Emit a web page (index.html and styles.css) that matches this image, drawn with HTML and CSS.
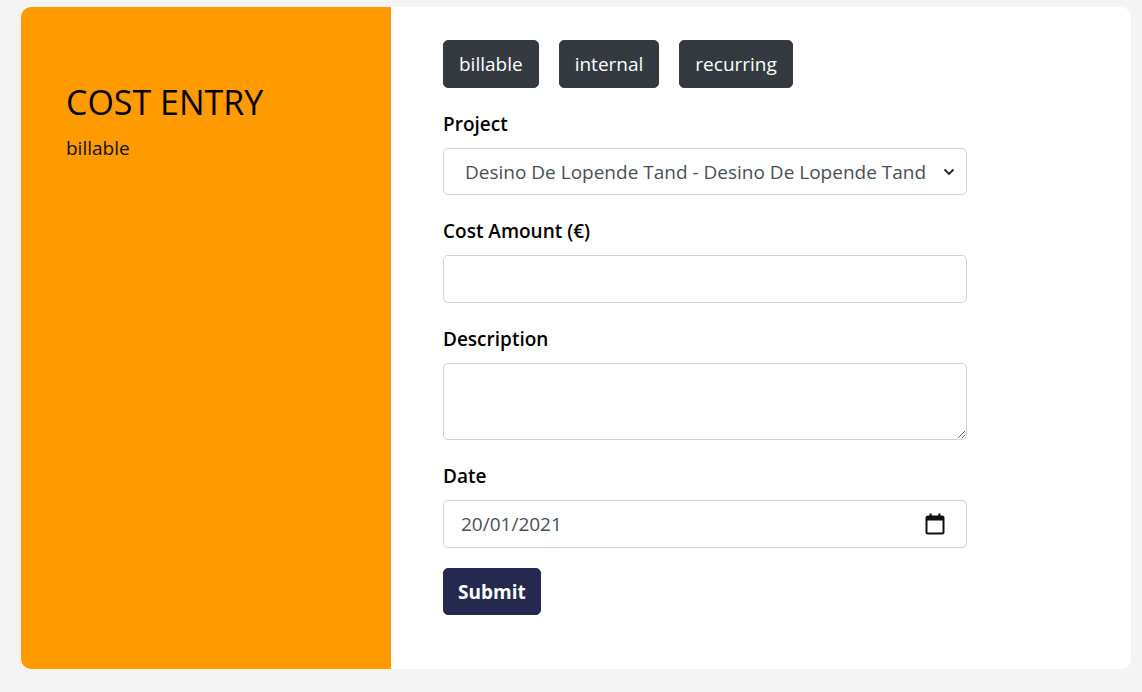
FILE: index.html
```html
<!DOCTYPE html>
<html lang="en">
<head>
<meta charset="utf-8">
<title>Cost Entry</title>
<link rel="stylesheet" href="styles.css">
</head>
<body>
<div class="card">
  <aside class="side">
    <h3 class="side-title">COST ENTRY</h3>
    <p class="side-sub">billable</p>
  </aside>
  <main class="content">
    <div class="types">
      <button class="btn btn-dark" type="button">billable</button>
      <button class="btn btn-dark" type="button">internal</button>
      <button class="btn btn-dark" type="button">recurring</button>
    </div>
    <form class="form">
      <div class="group">
        <label class="label" for="project">Project</label>
        <div class="select-wrap">
          <select id="project" class="control select">
            <option>Desino De Lopende Tand - Desino De Lopende Tand</option>
          </select>
          <svg class="chev" width="12" height="8" viewBox="0 0 12 8"><path d="M1.5 1.5 L6 6 L10.5 1.5" fill="none" stroke="#222" stroke-width="1.8"/></svg>
        </div>
      </div>
      <div class="group">
        <label class="label" for="amount">Cost Amount (€)</label>
        <input id="amount" class="control" type="text">
      </div>
      <div class="group">
        <label class="label" for="desc">Description</label>
        <textarea id="desc" class="control area" rows="2"></textarea>
      </div>
      <div class="group">
        <label class="label" for="date">Date</label>
        <div class="control date-field">
          <input id="date" class="date-input" type="text" value="20/01/2021">
          <svg class="cal" width="20" height="22" viewBox="0 0 20 22"><rect x="1.5" y="3.5" width="17" height="17" rx="1.5" fill="none" stroke="#111" stroke-width="2"/><rect x="1.5" y="3.5" width="17" height="4" fill="#111"/><rect x="4.5" y="0.5" width="2.2" height="4" fill="#111"/><rect x="13.3" y="0.5" width="2.2" height="4" fill="#111"/></svg>
        </div>
      </div>
      <button class="btn btn-submit" type="submit">Submit</button>
    </form>
  </main>
</div>
</body>
</html>
```
FILE: styles.css
```css
* { box-sizing: border-box; }
html, body { margin: 0; padding: 0; }
body {
  background: #f4f4f4;
  font-family: "Open Sans", "Noto Sans", sans-serif;
  font-size: 19px;
  line-height: 30px;
  color: #212529;
  padding: 7px 11px 23px 21px;
}
.card {
  display: flex;
  width: 1110px;
  min-height: 662px;
  background: #fff;
  border-radius: 10px;
  overflow: hidden;
}
.side {
  width: 370px;
  flex: none;
  background: #ff9b00;
  padding: 74px 45px 0 45px;
}
.side-title {
  margin: 0 0 10px 0;
  font-size: 34px;
  line-height: 42px;
  font-weight: 400;
  color: #000;
}
.side-sub {
  margin: 0;
  font-size: 19px;
  line-height: 30px;
  color: #111;
}
.content {
  flex: 1;
  padding: 33px 52px 54px 52px;
}
.types {
  display: flex;
  gap: 20px;
  margin-bottom: 20px;
}
.btn {
  font-family: inherit;
  font-size: 19px;
  line-height: 30px;
  padding: 8px 15px;
  border: 1px solid transparent;
  border-radius: 5px;
  cursor: pointer;
  color: #fff;
}
.btn-dark {
  background: #343a40;
  border-color: #343a40;
}
.form { width: 524px; }
.group { margin-bottom: 20px; }
.label {
  display: block;
  font-weight: 600;
  color: #000;
  padding-top: 1px;
  margin-bottom: 9px;
}
.control {
  display: block;
  width: 100%;
  height: 48px;
  font-family: inherit;
  font-size: 19px;
  line-height: 30px;
  color: #495057;
  background: #fff;
  border: 1px solid #ced4da;
  border-radius: 5px;
  padding: 7px 16px;
}
.select-wrap { position: relative; }
.select {
  height: 47px;
  appearance: none;
  -webkit-appearance: none;
  padding-left: 21px;
}
.chev {
  position: absolute;
  right: 12px;
  top: 20px;
  pointer-events: none;
}
.area {
  height: 77px;
  resize: vertical;
}
.date-field {
  display: flex;
  align-items: center;
  padding-left: 17px;
  padding-right: 21px;
}
.date-input {
  flex: 1;
  border: 0;
  outline: none;
  padding: 0;
  font-family: inherit;
  font-size: 19px;
  color: #495057;
  background: transparent;
}
.cal { flex: none; }
.btn-submit {
  background: #25284f;
  border-color: #25284f;
  font-weight: 700;
  padding: 7.5px 14px;
}
```
